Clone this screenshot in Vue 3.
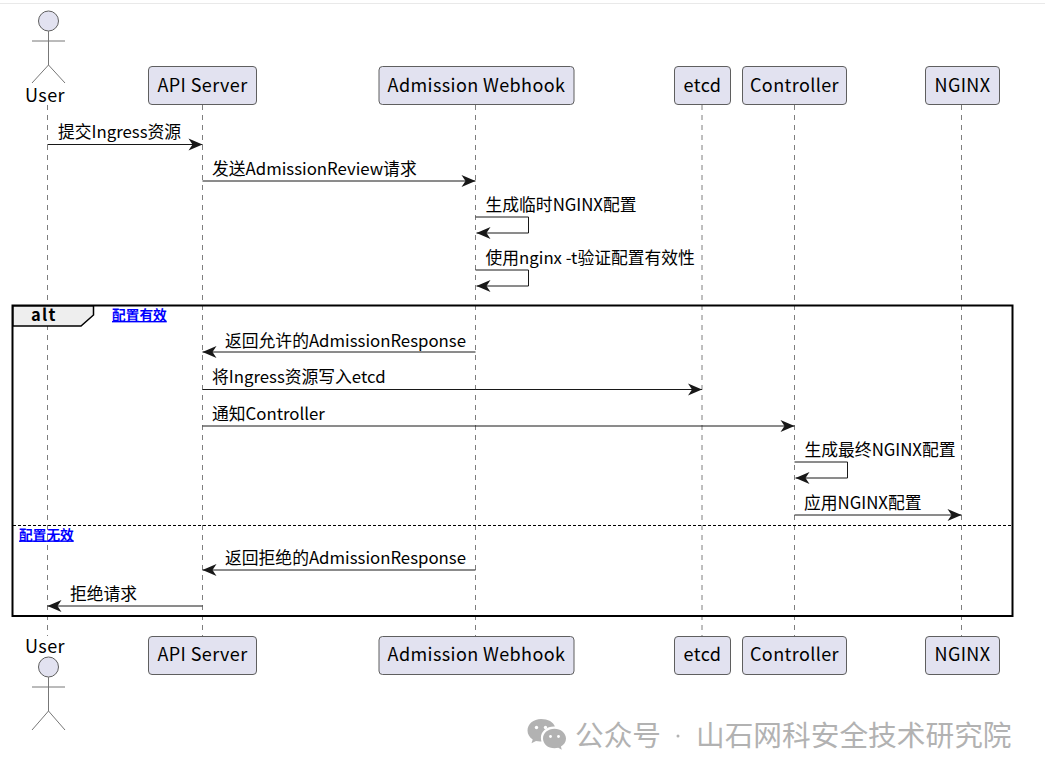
<script setup>
const lifelines = [47.5, 202.5, 475.5, 702, 794.5, 961.5]
const boxes = [
  { label: 'API Server', x: 148.5, w: 108 },
  { label: 'Admission Webhook', x: 379, w: 195 },
  { label: 'etcd', x: 674.5, w: 56 },
  { label: 'Controller', x: 742.5, w: 104 },
  { label: 'NGINX', x: 925.5, w: 74 }
]
const rows = [
  { top: 66.5, base: 91.5 },
  { top: 636.5, base: 660.5 }
]
const messages = [
  { from: 47.5, to: 202.5, y: 144.5, label: '提交Ingress资源', tx: 58, base: 137.5 },
  { from: 202.5, to: 475.5, y: 181, label: '发送AdmissionReview请求', tx: 212, base: 175 },
  { from: 475.5, to: 202.5, y: 352, label: '返回允许的AdmissionResponse', tx: 225, base: 346.5 },
  { from: 202.5, to: 702, y: 389.5, label: '将Ingress资源写入etcd', tx: 212, base: 383 },
  { from: 202.5, to: 794.5, y: 426, label: '通知Controller', tx: 212, base: 420 },
  { from: 794.5, to: 961.5, y: 515, label: '应用NGINX配置', tx: 804, base: 509 },
  { from: 475.5, to: 202.5, y: 570, label: '返回拒绝的AdmissionResponse', tx: 225, base: 564 },
  { from: 202.5, to: 47.5, y: 606, label: '拒绝请求', tx: 70, base: 600 }
]
const selfs = [
  { x: 475.5, y: 217, label: '生成临时NGINX配置' },
  { x: 475.5, y: 270, label: '使用nginx -t验证配置有效性' },
  { x: 794.5, y: 462, label: '生成最终NGINX配置' }
]
function head(tip, y, dir) {
  return `${tip},${y} ${tip - dir * 14},${y - 6} ${tip - dir * 10},${y} ${tip - dir * 14},${y + 6}`
}
</script>

<template>
  <div class="page">
    <svg class="diagram" width="1045" height="778" viewBox="0 0 1045 778">
      <line x1="0" y1="3.5" x2="1045" y2="3.5" class="topline" />

      <line v-for="x in lifelines" :key="x" :x1="x" :x2="x" y1="105" y2="636" class="life" />

      <g class="frame">
        <rect x="12.5" y="305.5" width="1000" height="310.5" class="frame-box" />
        <polygon points="13,306 93.5,306 93.5,315 81,326 13,326" class="frame-tab" />
        <line x1="13" y1="525.5" x2="1012" y2="525.5" class="divider" />
        <text x="31" y="321" class="alt">alt</text>
        <text x="112" y="320" class="guard">配置有效</text>
        <text x="19" y="539.5" class="guard">配置无效</text>
      </g>

      <g v-for="(m, i) in messages" :key="i">
        <line :x1="m.from" :x2="m.to" :y1="m.y" :y2="m.y" class="msg" />
        <polygon :points="head(m.to, m.y, m.to > m.from ? 1 : -1)" class="arrow" />
        <text :x="m.tx" :y="m.base" class="label">{{ m.label }}</text>
      </g>

      <g v-for="s in selfs" :key="s.y">
        <polyline :points="`${s.x},${s.y} ${s.x + 53},${s.y} ${s.x + 53},${s.y + 16} ${s.x + 1},${s.y + 16}`" class="msg open" />
        <polygon :points="head(s.x + 1, s.y + 16, -1)" class="arrow" />
        <text :x="s.x + 10" :y="s.y - 6" class="label">{{ s.label }}</text>
      </g>

      <g v-for="r in rows" :key="r.top">
        <g v-for="b in boxes" :key="b.label">
          <rect :x="b.x" :y="r.top" :width="b.w" height="38" rx="3.5" class="box" />
          <text :x="b.x + b.w / 2" :y="r.base" class="box-text">{{ b.label }}</text>
        </g>
      </g>

      <g class="actor">
        <circle cx="48.5" cy="21" r="10" class="box" />
        <path d="M48.5 31V65M32 41H65M32 83L48.5 65L65 83" class="stick" />
      </g>
      <text x="25" y="102" class="user">User</text>
      <text x="25" y="653" class="user">User</text>
      <g class="actor">
        <circle cx="48.5" cy="667" r="10" class="box" />
        <path d="M48.5 677V711M32 687H65M32 730L48.5 711L65 730" class="stick" />
      </g>

      <g class="wechat">
        <path d="M541 719c-7.500 0-13.500 5-13.500 11.500 0 3.700 2 6.800 5.200 9l-1.200 3.800 4.500-2.300c1.300.3 2.700.5 4 .5.500 0 1 0 1.500-.1-.4-1.200-.6-2.400-.6-3.700 0-6.300 5.800-11.200 13-11.200h1C553.500 722 548 719 541 719z" />
        <path d="M566 738.500c0-5.600-5.400-9.800-11.500-9.800-6.500 0-11.500 4.300-11.500 9.800s5 9.800 11.500 9.800c1.300 0 2.600-.2 3.800-.5l3.500 2-.9-3.200c3-1.800 5.100-4.700 5.100-8.100z" />
        <circle cx="536.500" cy="727.500" r="1.700" class="eye" />
        <circle cx="545.500" cy="727.500" r="1.700" class="eye" />
        <circle cx="550.500" cy="736.500" r="1.400" class="eye" />
        <circle cx="558.500" cy="736.500" r="1.400" class="eye" />
      </g>
      <text x="575" y="746" class="mark">公众号</text>
      <circle cx="678" cy="736" r="1.500" class="dot" />
      <text x="696" y="746" class="mark">山石网科安全技术研究院</text>
    </svg>
  </div>
</template>

<style scoped>
.page {
  width: 1045px;
  height: 778px;
  background: #fff;
  overflow: hidden;
}
.diagram {
  display: block;
}
text {
  font-family: "Noto Sans CJK SC", "Noto Sans", sans-serif;
}
.topline {
  stroke: #e9e9e9;
  stroke-width: 1;
}
.life {
  stroke: #7f7f7f;
  stroke-width: 1;
  stroke-dasharray: 5 5;
}
.frame-box {
  fill: none;
  stroke: #000;
  stroke-width: 2;
}
.frame-tab {
  fill: #eeeeee;
  stroke: #000;
  stroke-width: 1.500;
}
.divider {
  stroke: #000;
  stroke-width: 1;
  stroke-dasharray: 3 2;
}
.alt {
  font-size: 16.500px;
  font-weight: 700;
  letter-spacing: 1.300px;
  fill: #000;
}
.guard {
  font-size: 13.700px;
  font-weight: 700;
  fill: #0000ff;
  text-decoration: underline;
}
.msg {
  stroke: #181818;
  stroke-width: 1;
}
.open {
  fill: none;
}
.arrow {
  fill: #181818;
}
.label {
  font-size: 16.800px;
  fill: #000;
}
.box {
  fill: #e2e2f0;
  stroke: #5f5f5f;
  stroke-width: 1;
}
.box-text {
  font-size: 18px;
  letter-spacing: 0.400px;
  fill: #000;
  text-anchor: middle;
}
.user {
  font-size: 18px;
  letter-spacing: 0.400px;
  fill: #000;
}
.stick {
  fill: none;
  stroke: #777;
  stroke-width: 1;
}
.wechat {
  fill: #b2b2b2;
}
.eye {
  fill: #fff;
}
.dot {
  fill: #b2b2b2;
}
.mark {
  font-size: 28.700px;
  fill: #b2b2b2;
}
</style>
